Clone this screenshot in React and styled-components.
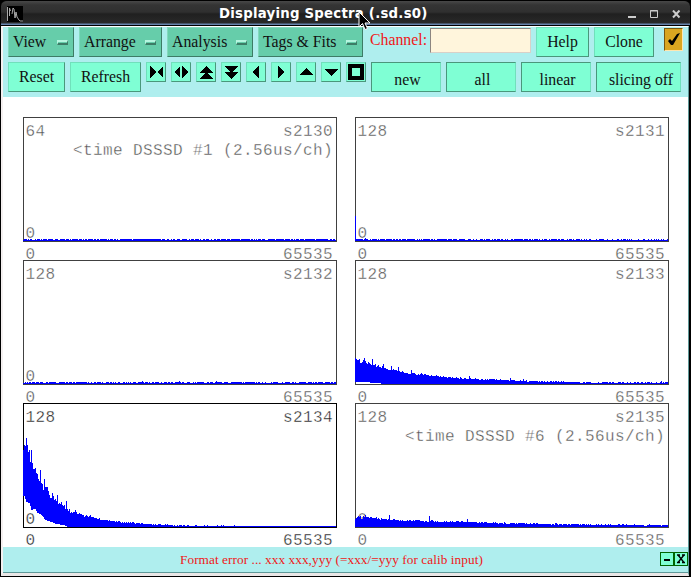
import React from "react";
import styled, { createGlobalStyle } from "styled-components";

const GlobalStyle = createGlobalStyle`
  * {
    box-sizing: border-box;
  }
  body {
    margin: 0;
    overflow: hidden;
    background: #000;
  }
`;

const TRACE_WIDTH = 313;

// [offset, height] pairs, joined linearly
const at = (points, x) => {
  for (let i = 1; i < points.length; i++) {
    const [x0, y0] = points[i - 1];
    const [x1, y1] = points[i];
    if (x <= x1) return y0 + ((y1 - y0) * (x - x0)) / (x1 - x0);
  }
  return points[points.length - 1][1];
};

const noise = (seed) => {
  let s = seed;
  return () => {
    s = (s * 16807) % 2147483647;
    return s / 2147483647;
  };
};

const buildTrace = ({ seed, top, bottom = [[0, 0], [313, 0]], peaks = {}, jitter = 0.14, head = [] }) => {
  const rand = noise(seed);
  let d = "";
  for (let x = 0; x < TRACE_WIDTH; x++) {
    const base = at(top, x);
    const r = rand();
    let h = Math.round(base + (r - 0.4) * (1 + base * jitter));
    if (x < head.length) h = head[x];
    if (peaks[x]) h = peaks[x];
    const low = Math.max(0, Math.round(at(bottom, x)));
    d += `M${x} ${124 - Math.max(h, 1)}h1V${124 - low}h-1z`;
  }
  return d;
};

const spectra = [
  {
    name: "s2130", max: 64, tag: "<time DSSSD #1 (2.56us/ch)",
    trace: { seed: 811, top: [[0, 1.65], [313, 1.65]] },
  },
  {
    name: "s2131", max: 128,
    trace: { seed: 377, top: [[0, 1.8], [120, 1.5], [313, 1.3]], peaks: { 0: 25, 10: 3 } },
  },
  {
    name: "s2132", max: 128,
    trace: { seed: 951, top: [[0, 1.6], [313, 1.6]], peaks: { 119: 3, 156: 3, 193: 3 } },
  },
  {
    name: "s2133", max: 128,
    trace: {
      seed: 4242,
      top: [[0, 24], [8, 22], [15, 19], [25, 17], [35, 14], [50, 11], [70, 9], [90, 7], [115, 5], [140, 4], [170, 3], [200, 2.4], [225, 1.6], [313, 1.2]],
      bottom: [[0, 2], [8, 2], [20, 1], [25, 0.5], [26, 0], [313, 0]],
      head: [26, 25, 24, 24, 25, 21, 21, 22, 24, 26, 23, 21, 20, 22, 21, 20, 19, 25],
      peaks: { 28: 20, 36: 18, 43: 17, 56: 14, 114: 8, 155: 6, 168: 5, 306: 3 },
      jitter: 0.1,
    },
  },
  {
    name: "s2134", max: 128, active: true,
    trace: {
      seed: 90210,
      top: [[0, 80], [55, 14], [60, 11], [70, 9], [80, 7], [90, 6], [100, 4.5], [120, 3.2], [135, 2.3], [150, 1.7], [170, 1], [313, 0.5]],
      bottom: [[0, 31], [1, 31], [3, 25], [6, 24], [8, 17], [12, 18], [14, 14], [18, 12], [22, 7], [28, 5], [33, 3], [40, 2], [45, 0], [313, 0]],
      head: [77, 82, 81, 89, 82, 75, 77, 65, 77, 64, 58, 58, 59, 54, 53, 48, 46, 57, 44, 43, 37, 48, 40, 40, 40, 36, 32, 29, 29, 34, 31, 27, 28, 26, 32, 23, 24, 23, 25, 22, 21, 22, 18, 26, 18, 16, 18, 14, 15, 14, 15, 15, 17, 15, 13, 13],
      peaks: { 62: 11, 67: 12, 110: 5, 194: 2 },
      jitter: 0.1,
    },
  },
  {
    name: "s2135", max: 128, tag: "<time DSSSD #6 (2.56us/ch)",
    trace: {
      seed: 1357,
      top: [[0, 10], [15, 9], [40, 7], [70, 6], [100, 5], [140, 4], [190, 3], [240, 2.3], [313, 1.6]],
      head: [8, 9, 10, 11, 10, 11, 8, 8, 11, 10, 12],
      peaks: { 34: 12, 74: 11, 112: 8 },
      jitter: 0.12,
    },
  },
];

const arrows = [
  "M4 4L10 10L4 16zM17 4L11 10L17 16z",
  "M9 4v12L3 10zM11 4v12L17 10z",
  "M10 4l7 7h-14zM10 10l7 7h-14z",
  "M3 4h14l-7 7zM3 10h14l-7 7z",
  "M13 4v12L6 10z",
  "M7 4v12L14 10z",
  "M10 6l7 7h-14z",
  "M3 7h14l-7 7z",
];

export default function App() {
  return (
    <>
      <GlobalStyle />
      <Window>
        <TitleBar>
          <AppIcon viewBox="0 0 16 16">
            <path d="M0 0h16v16H0z" fill="#000" />
            <path d="M.5 15V1M2.5 10V2l1 3M5 8l1-6 1 1 1 9 1-6 1 5 2 3 1 1h3" fill="none" stroke="#aaa" />
          </AppIcon>
          <Title>Displaying Spectra (.sd.s0)</Title>
          <WindowButtons viewBox="0 0 53 10">
            <path d="M0 6h8v2H0z" fill="#ccc" />
            <path d="M22.5 .5h7v7h-7zM22 1h8" fill="none" stroke="#ccc" />
            <path d="M45 .5l6.5 7M51.5 .5l-6.5 7" fill="none" stroke="#ccc" strokeWidth="2" />
          </WindowButtons>
        </TitleBar>

        <Content>
          <Toolbar>
            <MenuRow>
              <MenuButton $width={66}>View<Dash /></MenuButton>
              <MenuButton $width={83}>Arrange<Dash /></MenuButton>
              <MenuButton $width={86}>Analysis<Dash /></MenuButton>
              <MenuButton $width={105}>Tags &amp; Fits<Dash /></MenuButton>
              <ChannelLabel>Channel:</ChannelLabel>
              <ChannelInput />
              <Button $width={53}>Help</Button>
              <Button $width={60} $gap={5}>Clone</Button>
              <Toggle>
                <svg width="17" height="21" viewBox="0 0 17 21">
                  <path d="M3 12l2-2 2 2 5-7 3-1L8 16H6z" />
                </svg>
              </Toggle>
            </MenuRow>
            <ButtonRow>
              <Button $width={57}>Reset</Button>
              <Button $width={71}>Refresh</Button>
              {arrows.map((d) => (
                <ArrowButton key={d}>
                  <svg width="20" height="20" viewBox="0 0 20 20" shapeRendering="crispEdges">
                    <path d={d} />
                  </svg>
                </ArrowButton>
              ))}
              <ArrowButton>
                <svg width="20" height="20" viewBox="0 0 20 20">
                  <path d="M4 4h12v12H4z" fill="none" stroke="#000" strokeWidth="4" />
                </svg>
              </ArrowButton>
              <ModeButton $width={70}>new</ModeButton>
              <ModeButton $width={70}>all</ModeButton>
              <ModeButton $width={70}>linear</ModeButton>
              <ModeButton $width={85} $shift={5}>slicing off</ModeButton>
            </ButtonRow>
          </Toolbar>

          <SpectrumGrid>
            {spectra.map((s) => (
              <Spectrum key={s.name} $active={s.active}>
                <Plot $active={s.active}>
                  <PlotLine>
                    <span>{s.max}</span>
                    <span>{s.name}</span>
                  </PlotLine>
                  {s.tag && <Tag>{s.tag}</Tag>}
                  <Floor>0</Floor>
                  <Trace viewBox="0 0 313 124" shapeRendering="crispEdges">
                    <path d={buildTrace(s.trace)} fill="#00f" />
                  </Trace>
                </Plot>
                <Axis>
                  <span>0</span>
                  <span>65535</span>
                </Axis>
              </Spectrum>
            ))}
          </SpectrumGrid>

          <StatusBar>
            <Message>Format error ... xxx xxx,yyy (=xxx/=yyy for calib input)</Message>
            <StatusButtons>
              <StatusButton>
                <svg width="11" height="11" viewBox="0 0 11 11" shapeRendering="crispEdges">
                  <path d="M3 6h6v2H3z" />
                </svg>
              </StatusButton>
              <StatusButton>
                <svg width="11" height="11" viewBox="0 0 11 11">
                  <path d="M3 2l6 7.5M9 2l-6 7.5M2 2h3M7 2h3M2 9.5h3M7 9.5h3" stroke="#000" strokeWidth="1.3" />
                </svg>
              </StatusButton>
            </StatusButtons>
          </StatusBar>
        </Content>
        <Pointer viewBox="0 0 13 20">
          <path d="M1 1v15l3.5-3.5L7 18.5l2.5-1L7 12h5z" fill="#000" stroke="#fff" />
        </Pointer>
      </Window>
    </>
  );
}

const Window = styled.div`
  position: relative;
  width: 691px;
  height: 577px;
  display: flex;
  flex-direction: column;
  background: #000;
`;

const TitleBar = styled.div`
  height: 26px;
  flex: none;
  margin: 0 1px;
  display: grid;
  grid-template-columns: 212px 1fr 62px;
  align-items: center;
  padding: 1px 0 0 6px;
  border-top: 1px solid #000;
  border-bottom: 1px solid #000;
  border-radius: 6px 6px 0 0;
  background: linear-gradient(#484848 0, #343434 4px, #303030 11px, #202020 13px, #292929 22px, #6684ad 23px);
`;

const AppIcon = styled.svg`
  width: 16px;
  height: 16px;
`;

const Title = styled.div`
  color: #fff;
  font: bold 13.3px/20px "DejaVu Sans", sans-serif;
  letter-spacing: 0.23px;
  white-space: nowrap;
`;

const WindowButtons = styled.svg`
  width: 53px;
  height: 10px;
  margin-top: 2px;
`;

const Pointer = styled.svg`
  position: absolute;
  left: 358px;
  top: 11px;
  width: 13px;
  height: 20px;
`;

const Content = styled.div`
  width: 688px;
  height: 550px;
  margin-left: 1px;
  display: flex;
  flex-direction: column;
  border-left: 2px solid #f4f0f0;
  border-right: 1px solid #5f9898;
  border-bottom: 3px solid #eae6e6;
  border-top: 1px solid #fff;
  background: #fff;
  font: 15.8px "Liberation Serif", serif;
`;

const Toolbar = styled.div`
  height: 70px;
  flex: none;
  padding-left: 5px;
  background: #afeeee;
`;

const MenuRow = styled.div`
  height: 35px;
  display: flex;
  align-items: flex-start;
`;

const ButtonRow = styled.div`
  display: flex;
  align-items: flex-start;
  gap: 5px;
`;

const Button = styled.div`
  width: ${(p) => p.$width}px;
  height: 30px;
  flex: none;
  margin-left: ${(p) => p.$gap || 0}px;
  border: 1px solid;
  border-color: #70e0bb #4a977b #4a977b #70e0bb;
  background: #7fffd4;
  color: #111;
  line-height: 28px;
  text-align: center;
`;

const ModeButton = styled(Button)`
  border-color: #4a977b #70e0bb #4a977b #4a977b;
  padding: 3px 0 0 ${(p) => p.$shift || 3}px;
`;

const MenuButton = styled.div`
  width: ${(p) => p.$width}px;
  height: 30px;
  flex: none;
  display: flex;
  align-items: center;
  justify-content: space-between;
  margin-right: 5px;
  padding: 0 5px 0 4px;
  border: 1px solid;
  border-color: #83d9bd #3d7c66 #3d7c66 #83d9bd;
  background: #66cdaa;
  color: #111;
`;

const Dash = styled.span`
  width: 11px;
  height: 5px;
  border: 1px solid;
  border-width: 2px 1px;
  border-color: #b5f5df #3d7c66 #3d7c66 #b5f5df;
`;

const ChannelLabel = styled.div`
  width: 61px;
  flex: none;
  padding-left: 1px;
  margin-left: 1px;
  color: #f01818;
  line-height: 26px;
`;

const ChannelInput = styled.div`
  width: 101px;
  height: 25px;
  margin: 1px 5px 0 0;
  border: 1px solid;
  border-color: #8c8580 #d8d0c8 #d8d0c8 #8c8580;
  background: #fff5dc;
`;

const Toggle = styled.div`
  width: 19px;
  height: 23px;
  margin: 1px 0 0 10px;
  border: 1px solid;
  border-color: #795711 #ffe6b0 #ffe6b0 #795711;
  background: #daa520;
`;

const ArrowButton = styled.div`
  width: 20px;
  height: 20px;
  flex: none;
  overflow: hidden;
  border: 1px solid;
  border-color: #70e0bb #4a977b #4a977b #70e0bb;
  background: #7fffd4;

  svg {
    display: block;
    margin: -1px;
  }
`;

const SpectrumGrid = styled.div`
  flex: 1;
  min-height: 0;
  display: grid;
  grid-template-columns: 314px 314px;
  grid-auto-rows: 143px;
  column-gap: 18px;
  padding: 20px 0 0 20px;
`;

const Spectrum = styled.div`
  color: ${(p) => (p.$active ? "#181818" : "#505050")};
  font: 16px/19px "Liberation Mono", monospace;
  letter-spacing: 0.4px;
  white-space: nowrap;
  -webkit-text-stroke: 0.35px #fff;
`;

const Plot = styled.div`
  position: relative;
  height: 125px;
  padding: 5px 3px 0 1.5px;
  border: 1px solid ${(p) => (p.$active ? "#000" : "#404040")};
`;

const PlotLine = styled.div`
  display: flex;
  justify-content: space-between;
`;

const Tag = styled.div`
  text-align: right;
`;

const Floor = styled.span`
  position: absolute;
  left: 1.5px;
  bottom: -3px;
`;

const Trace = styled.svg`
  position: absolute;
  left: -1px;
  bottom: 0;
  width: 313px;
  height: 124px;
`;

const Axis = styled.div`
  display: flex;
  justify-content: space-between;
  height: 18px;
  padding: 4px 4px 0 2.5px;
`;

const StatusBar = styled.div`
  height: 26px;
  flex: none;
  display: flex;
  justify-content: space-between;
  padding-left: 177px;
  border-bottom: 1px solid #5f9898;
  background: #afeeee;
`;

const Message = styled.div`
  color: #f01818;
  font-size: 13.3px;
  letter-spacing: 0.05px;
  line-height: 26px;
  white-space: nowrap;
`;

const StatusButtons = styled.div`
  display: flex;
  padding-top: 5px;
`;

const StatusButton = styled.div`
  width: 14px;
  height: 14px;
  border: 1px solid #006400;
  background: #7fffd4;
  overflow: hidden;

  svg {
    display: block;
  }
`;
